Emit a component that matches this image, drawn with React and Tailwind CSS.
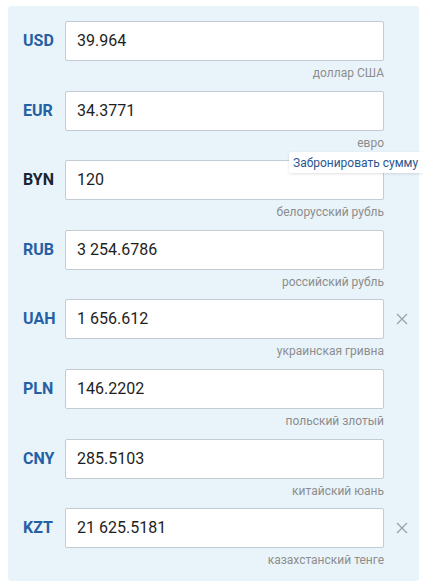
import React from 'react';

const rows = [
  { code: 'USD', value: '39.964', name: 'доллар США' },
  { code: 'EUR', value: '34.3771', name: 'евро' },
  { code: 'BYN', value: '120', name: 'белорусский рубль', base: true },
  { code: 'RUB', value: '3 254.6786', name: 'российский рубль' },
  { code: 'UAH', value: '1 656.612', name: 'украинская гривна', removable: true },
  { code: 'PLN', value: '146.2202', name: 'польский злотый' },
  { code: 'CNY', value: '285.5103', name: 'китайский юань' },
  { code: 'KZT', value: '21 625.5181', name: 'казахстанский тенге', removable: true },
];

const CloseIcon = () => (
  <svg width="12" height="12" viewBox="0 0 12 12" className="text-[#9aa0a6]">
    <path d="M1 1 L11 11 M11 1 L1 11" stroke="currentColor" strokeWidth="1.3" fill="none" />
  </svg>
);

const App = () => {
  return (
    <div className="relative w-[423px] h-[583px] bg-white pt-[6px] pl-[8px] font-['Roboto','Liberation_Sans',sans-serif]">
      <div className="w-[411px] h-[575px] bg-[#e9f4fa] rounded-[3px] pt-[15px] pl-[15px] flex flex-col gap-[9.6px]">
        {rows.map((r) => (
          <div key={r.code} className="flex flex-col">
            <div className="flex items-center">
              <span
                className={`w-[42px] text-[16px] font-bold ${r.base ? 'text-[#1b2433]' : 'text-[#2660a4]'}`}
              >
                {r.code}
              </span>
              <div className="w-[319px] h-[40px] bg-white border border-[#c3cbd3] rounded-[2px] flex items-center pl-[11px] text-[16px] text-[#1e1e1e]">
                {r.value}
              </div>
              <div className="w-[35px] flex items-center justify-center">
                {r.removable && <CloseIcon />}
              </div>
            </div>
            <div className="w-[361px] mt-1 text-right text-[12px] leading-[16px] text-[#8d8d8d]">
              {r.name}
            </div>
          </div>
        ))}
      </div>
      <div className="absolute left-[289px] top-[152px] w-[134px] h-[21px] bg-white rounded-l-[2px] shadow-[0_1px_3px_rgba(0,0,0,0.12)] flex items-center pl-[4px] text-[12px] text-[#2a568f] whitespace-nowrap">
        Забронировать сумму
      </div>
    </div>
  );
};

export default App;
